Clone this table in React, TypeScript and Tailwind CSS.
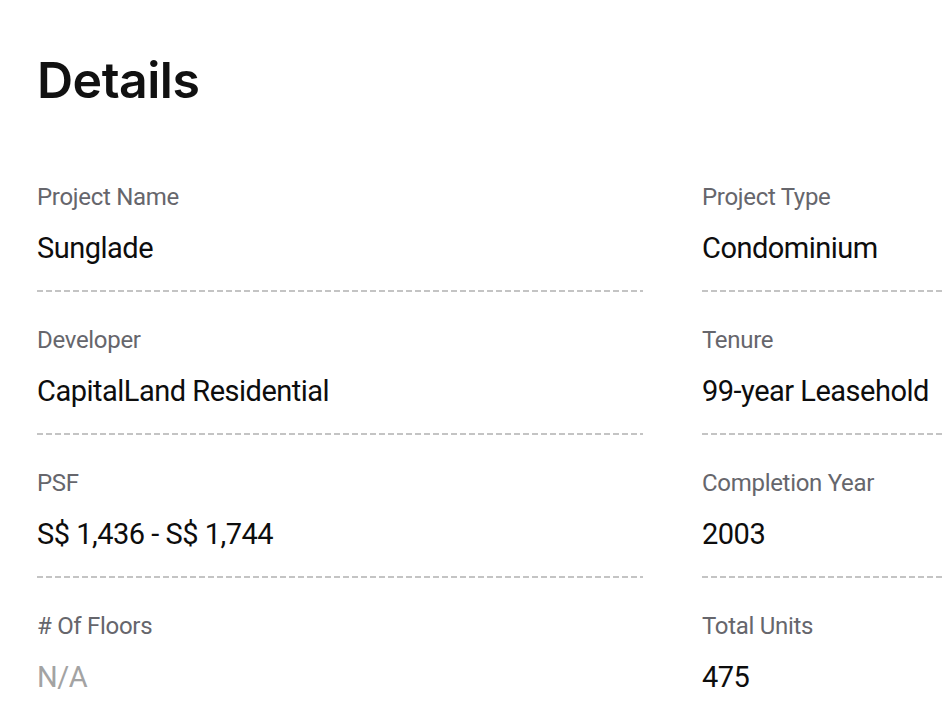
import React from "react";

type Item = { label: string; value: string; muted?: boolean };

const rows: [Item, Item][] = [
  [
    { label: "Project Name", value: "Sunglade" },
    { label: "Project Type", value: "Condominium" },
  ],
  [
    { label: "Developer", value: "CapitalLand Residential" },
    { label: "Tenure", value: "99-year Leasehold" },
  ],
  [
    { label: "PSF", value: "S$ 1,436 - S$ 1,744" },
    { label: "Completion Year", value: "2003" },
  ],
  [
    { label: "# Of Floors", value: "N/A", muted: true },
    { label: "Total Units", value: "475" },
  ],
];

function Field({ item }: { item: Item }) {
  return (
    <div className="flex flex-col">
      <span className="text-[24px] leading-[28px] tracking-[-0.3px] text-[#66666c]">
        {item.label}
      </span>
      <span
        className={
          "mt-[20px] text-[29px] leading-[34px] tracking-[-0.5px] " +
          (item.muted ? "text-[#a3a3a3]" : "text-[#0d0d0d]")
        }
      >
        {item.value}
      </span>
      <div className="mt-[25px] h-[2px] w-full bg-[linear-gradient(to_right,#c4c4c4_6px,transparent_6px)] bg-[length:9px_2px] bg-repeat-x" />
    </div>
  );
}

export default function App() {
  return (
    <div
      className="min-h-screen w-full overflow-hidden bg-white"
      style={{ fontFamily: "Roboto, 'Liberation Sans', sans-serif" }}
    >
      <div className="w-[1320px] pl-[37px] pt-[50px]">
        <h1
          className="text-[50px] leading-[60px] font-semibold tracking-[-0.5px] text-[#111111]"
          style={{ fontFamily: "Inter, 'Liberation Sans', sans-serif" }}
        >
          Details
        </h1>

        <div className="mt-[73px] flex flex-col gap-[34px]">
          {rows.map((row, i) => (
            <div key={i} className="grid grid-cols-[606px_606px] gap-x-[59px]">
              <Field item={row[0]} />
              <Field item={row[1]} />
            </div>
          ))}
        </div>
      </div>
    </div>
  );
}
